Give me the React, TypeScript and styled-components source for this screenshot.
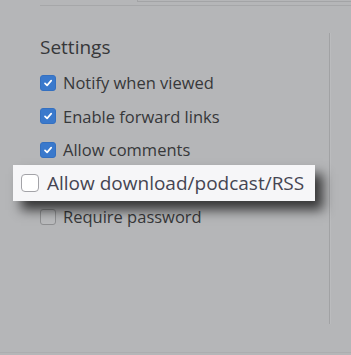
import React from 'react';
import styled, { createGlobalStyle } from 'styled-components';

const GlobalStyle = createGlobalStyle`
  html, body {
    margin: 0;
    padding: 0;
    background: #b5b6b8;
  }
  body {
    width: 351px;
    height: 355px;
    overflow: hidden;
    font-family: "Open Sans", "Liberation Sans", sans-serif;
  }
`;

const Page = styled.div`
  width: 351px;
  height: 355px;
  display: flex;
  flex-direction: column;
  background: #b5b6b8;
`;

const TopBar = styled.div`
  margin-left: 40px;
  height: 5px;
  border-bottom: 1px solid #a6a7a9;
  display: flex;
`;

const FieldEdge = styled.div`
  margin-left: 97px;
  flex: 1;
  height: 1px;
  border-left: 1px solid #a3a4a6;
  border-bottom: 1px solid #a3a4a6;
`;

const Body = styled.div`
  flex: 1;
  display: flex;
  padding-top: 27px;
`;

const Panel = styled.section`
  margin-left: 40px;
  width: 289px;
  height: 291px;
  border-right: 1px solid #a1a2a4;
  box-shadow: 1px 0 0 #bbbcbe;
  display: flex;
  flex-direction: column;
`;

const Heading = styled.h3`
  margin: 2px 0 0;
  font-size: 19px;
  line-height: 24px;
  font-weight: 400;
  color: #37383a;
`;

const List = styled.div`
  margin-top: 7px;
  display: flex;
  flex-direction: column;
`;

const Row = styled.label<{ $zoomed?: boolean }>`
  display: flex;
  align-items: center;
  height: 33.5px;
  gap: ${p => (p.$zoomed ? '8px' : '7px')};
  font-size: ${p => (p.$zoomed ? '19px' : '16.5px')};
  color: ${p => (p.$zoomed ? '#454552' : '#37383a')};
  ${p =>
    p.$zoomed &&
    `
    margin: -1.25px 14px -1.25px -27px;
    height: 36px;
    padding-left: 8px;
    background: #f6f6f8;
    box-shadow: 8px 9px 11px rgba(0, 0, 0, 0.7);
    position: relative;
    z-index: 1;
  `}
`;

const Box = styled.span<{ $checked?: boolean; $zoomed?: boolean }>`
  flex: none;
  box-sizing: border-box;
  width: ${p => (p.$zoomed ? '18px' : '16px')};
  height: ${p => (p.$zoomed ? '18px' : '16px')};
  border-radius: ${p => (p.$zoomed ? '4px' : '3px')};
  display: flex;
  align-items: center;
  justify-content: center;
  background: ${p => (p.$checked ? '#3a79cc' : p.$zoomed ? '#ffffff' : '#b9babc')};
  border: 1px solid ${p => (p.$checked ? '#3470c0' : p.$zoomed ? '#a3a3a8' : '#8e8f91')};
`;

const Check = () => (
  <svg width="10" height="10" viewBox="0 0 10 10">
    <path d="M2 5.3 L4.1 7.4 L8.2 2.6" fill="none" stroke="#fff" strokeWidth="1.7" strokeLinecap="round" strokeLinejoin="round" />
  </svg>
);

const Footer = styled.div`
  height: 2px;
  border-top: 1px solid #acadaf;
`;

const options = [
  { label: 'Notify when viewed', checked: true },
  { label: 'Enable forward links', checked: true },
  { label: 'Allow comments', checked: true },
  { label: 'Allow download/podcast/RSS', checked: false, zoomed: true },
  { label: 'Require password', checked: false },
];

export default function App() {
  return (
    <Page>
      <GlobalStyle />
      <TopBar>
        <FieldEdge />
      </TopBar>
      <Body>
        <Panel>
          <Heading>Settings</Heading>
          <List>
            {options.map(o => (
              <Row key={o.label} $zoomed={o.zoomed}>
                <Box $checked={o.checked} $zoomed={o.zoomed}>
                  {o.checked && <Check />}
                </Box>
                {o.label}
              </Row>
            ))}
          </List>
        </Panel>
      </Body>
      <Footer />
    </Page>
  );
}
